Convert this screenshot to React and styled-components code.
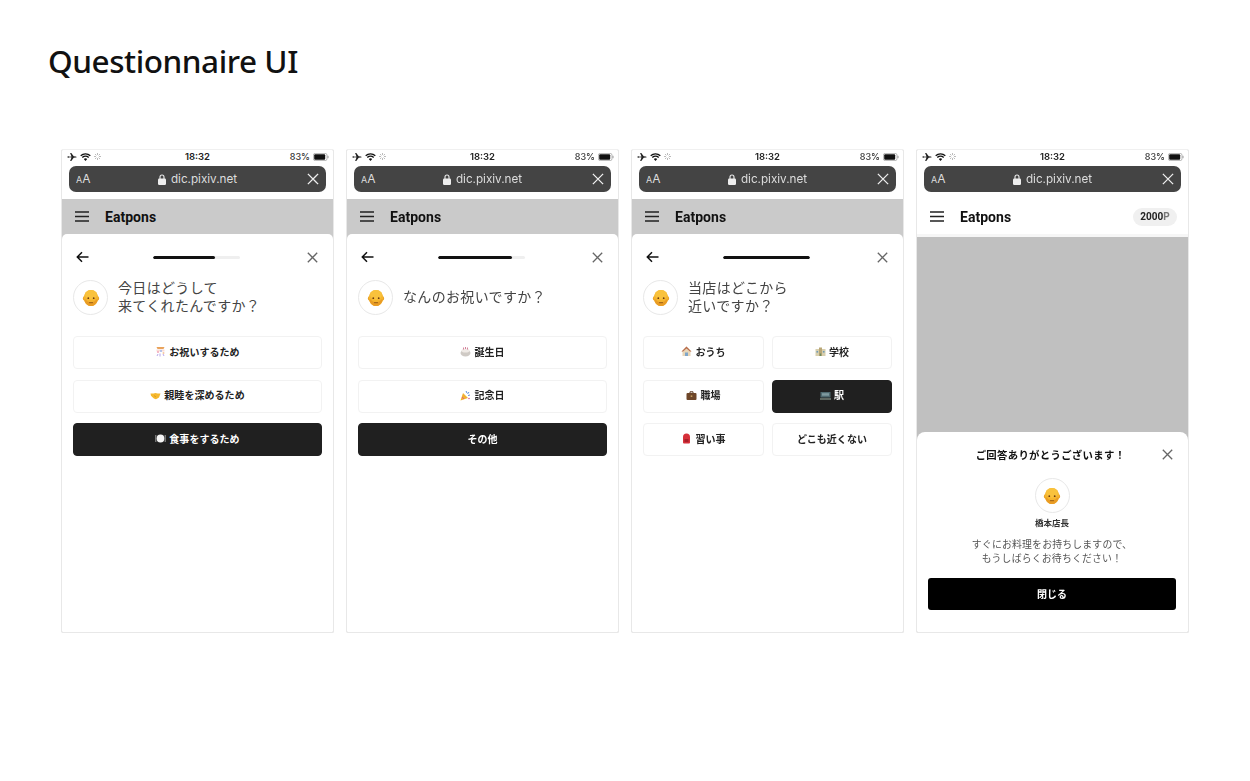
import React from "react";
import styled, { createGlobalStyle } from "styled-components";

const Global = createGlobalStyle`
  html, body { margin: 0; padding: 0; background: #fff; }
  body { font-family: "Noto Sans", "Noto Sans CJK JP", sans-serif; }
  * { box-sizing: border-box; }
`;
const JP = `"Noto Sans CJK JP", "Noto Sans", sans-serif`;

const Page = styled.main`
  width: 1250px; height: 781px; overflow: hidden; padding: 39px 0 0 48px;
`;
const Title = styled.h1`
  margin: 0; font: 500 31.5px/44px "Noto Sans", sans-serif; letter-spacing: -.45px; color: #111;
`;
const Screens = styled.div`
  display: flex; gap: 12px; margin: 66px 0 0 13px; filter: blur(.3px);
`;
const Phone = styled.section`
  width: 273px; height: 484px; display: flex; flex-direction: column;
  background: ${p => p.$tone}; border: 1px solid #e8e8e8; border-top-color: #f0f0f0; border-radius: 2px; overflow: hidden;
`;
const TopBars = styled.div`flex: none; background: #fff;`;
const Status = styled.div`
  height: 13px; padding: 0 4px 0 5px; display: flex; align-items: center; justify-content: space-between;
  position: relative; font: 500 9px/13px Inter, sans-serif; color: #333;
`;
const StatusGroup = styled.div`display: flex; align-items: center; gap: 3px;`;
const Clock = styled.span`position: absolute; left: 0; right: 0; text-align: center; font-weight: 600; font-size: 9.5px; color: #222;`;
const UrlBar = styled.div`
  height: 26px; margin: 3px 7px 7px; padding: 0 7px; background: #444; border-radius: 7px;
  display: flex; align-items: center; justify-content: space-between; color: #ddd; position: relative;
`;
const AaLabel = styled.span`font: 400 12px/26px Inter, sans-serif; small { font-size: 9px; }`;
const Address = styled.span`
  position: absolute; left: 0; right: 0; display: flex; justify-content: center; align-items: center; gap: 5px;
  font: 400 11.7px/26px Inter, sans-serif;
`;
const Header = styled.header`
  flex: none; height: 35px; padding: 0 11px 0 13px; display: flex; align-items: center; gap: 16px;
  background: ${p => (p.$light ? "#fff" : "#cacaca")};
`;
const Brand = styled.span`font: 700 14px/20px Roboto, sans-serif; letter-spacing: .03px; color: #111; flex: 1;`;
const Points = styled.span`
  width: 44px; height: 18px; border-radius: 9px; background: #f0f0f0; text-align: center;
  font: 700 10px/18px Roboto, sans-serif; color: #222; em { font-style: normal; color: #777; }
`;
const Card = styled.div`
  flex: 1; background: #fff; border-radius: 5px 5px 0 0; padding: 0 11px;
  display: flex; flex-direction: column;
`;
const Nav = styled.div`
  height: 46px; flex: none; padding: 0 4px 0 3px; display: flex; align-items: center; justify-content: space-between;
`;
const Track = styled.div`width: 87px; height: 3px; margin-left: -4px; background: #efefef; border-radius: 2px; overflow: hidden;`;
const Fill = styled.div`height: 100%; background: #111; border-radius: 2px;`;
const Question = styled.div`
  height: 35px; flex: none; display: flex; align-items: center; gap: 10px;
`;
const Avatar = styled.div`
  width: 35px; height: 35px; flex: none; border-radius: 50%; border: 1px solid #e8e8e8;
  display: flex; align-items: center; justify-content: center; background: #fff;
`;
const QText = styled.p`
  margin: 0 0 4px; font: 400 14px/18px ${JP}; letter-spacing: .33px; color: #444; white-space: pre-line;
`;
const Choices = styled.div`
  margin-top: 21px; display: grid; row-gap: 10.5px; column-gap: 8px;
  grid-template-columns: ${p => (p.$two ? "121px 120px" : "249px")};
`;
const Choice = styled.button`
  height: 33px; padding: 0 0 2px; border-radius: 4px; display: flex; align-items: center; justify-content: center; gap: 3px;
  border: 1px solid ${p => (p.$on ? "#202020" : "#f2f2f2")};
  background: ${p => (p.$on ? "#202020" : "#fff")};
  color: ${p => (p.$on ? "#fff" : "#222")};
  font: 700 10px/14px ${JP}; letter-spacing: .05px;
`;
const Blank = styled.div`flex: 1; background: #c0c0c0; border-top: 3px solid #f6f6f6;`;
const Sheet = styled.div`
  flex: none; height: 200px; background: #fff; border-radius: 8px 8px 0 0; margin-top: -1px; padding: 0 12px 0 11px;
  display: flex; flex-direction: column; align-items: center; position: relative;
`;
const SheetTitle = styled.h2`
  margin: 15px 0 0; font: 700 10.4px/16px ${JP}; letter-spacing: .3px; color: #111; transform: translateX(-1.500px);
`;
const SheetClose = styled.span`position: absolute; right: 15px; top: 17px; display: flex;`;
const SheetAvatar = styled(Avatar)`margin-top: 15px;`;
const Manager = styled.div`margin-top: 3px; font: 700 8.5px/12px ${JP}; color: #333;`;
const Message = styled.p`
  margin: 9px 0 0; text-align: center; font: 400 9.9px/14px ${JP}; letter-spacing: .17px; color: #555; white-space: pre-line;
`;
const CloseButton = styled.button`
  margin-top: 13px; width: 100%; height: 32px; border: 0; border-radius: 3px; background: #000; color: #fff;
  font: 700 10px/14px ${JP};
`;

const Face = ({ s = 18 }) => (
  <svg width={s} height={s} viewBox="0 0 20 20">
    <ellipse cx="2.600" cy="10.500" rx="1.600" ry="2.400" fill="#e8a025" />
    <ellipse cx="17.400" cy="10.500" rx="1.600" ry="2.400" fill="#e8a025" />
    <ellipse cx="10" cy="10" rx="8" ry="9" fill="#f5b52e" />
    <ellipse cx="10" cy="6.500" rx="6.500" ry="5.500" fill="#f9c23c" />
    <path d="M2.300 11c.8 5 4 8 7.700 8s6.900-3 7.700-8c-.7.800-1.400 1-2.200.6-.7 2.200-2.800 2.900-5.500 2.900s-4.800-.7-5.500-2.900c-.8.400-1.500.2-2.200-.6z" fill="#e99c24" />
    <circle cx="7" cy="10.200" r="1" fill="#6b3b12" /><circle cx="13" cy="10.200" r="1" fill="#6b3b12" />
    <path d="M7.800 15.200h4.400" stroke="#8a5214" strokeWidth=".9" />
  </svg>
);
const X = ({ s = 11, c = "#666", w = 1.3 }) => (
  <svg width={s} height={s} viewBox="0 0 11 11"><path d="M.8.800l9.400 9.400M10.200.800L.8 10.200" stroke={c} strokeWidth={w} fill="none" /></svg>
);
const Back = () => (
  <svg width="13" height="12" viewBox="0 0 13 12"><path d="M12.500 6H1.500M6 1.300L1.300 6 6 10.700" stroke="#111" strokeWidth="1.500" fill="none" /></svg>
);
const Burger = () => (
  <svg width="14" height="11" viewBox="0 0 14 11"><path d="M0 1h14M0 5.500h14M0 10h14" stroke="#222" strokeWidth="1.400" /></svg>
);
const Lock = () => (
  <svg width="8" height="11" viewBox="0 0 8 11"><path d="M2 5V3a2 2 0 014 0v2" stroke="#eee" strokeWidth="1.100" fill="none" /><rect y="4.500" width="8" height="6.500" rx="1.200" fill="#eee" /></svg>
);
const Plane = () => (
  <svg width="10" height="8" viewBox="0 0 9 8"><path d="M0 3.400l1-.2 1.300.5L4 3.500 2.600 0h1.200l2.400 3.300 2.100.1c1 .3 1 .9 0 1.200l-2.100.1L3.800 8H2.600L4 4.500l-1.700-.2-1.300.5-1-.2z" fill="#222" /></svg>
);
const Wifi = () => (
  <svg width="11" height="8" viewBox="0 0 11 8"><path d="M.7 2.800a7 7 0 019.600 0M2.300 4.500a4.600 4.600 0 016.400 0" stroke="#111" strokeWidth="1.400" fill="none" /><path d="M5.500 8L3.800 6a2.400 2.400 0 013.400 0z" fill="#111" /></svg>
);
const Spinner = () => (
  <svg width="7" height="7" viewBox="0 0 7 7"><path d="M3.500 0v2M3.500 5v2M0 3.500h2M5 3.500h2M1 1l1.400 1.400M4.600 4.600L6 6M6 1L4.600 2.400M1 6l1.400-1.400" stroke="#aaa" strokeWidth=".8" /></svg>
);
const Battery = () => (
  <svg width="16" height="8" viewBox="0 0 16 8"><rect x=".4" y=".4" width="13.600" height="7.200" rx="1.800" fill="none" stroke="#999" strokeWidth=".7" /><rect x="1.200" y="1.200" width="11" height="5.600" rx="1" fill="#111" /><path d="M15 2.800v2.400" stroke="#999" /></svg>
);

const E = ({ children }) => <svg width="11" height="11" viewBox="0 0 11 11">{children}</svg>;
const icons = {
  confetti: <E><path d="M1.500 1h8L8.500 3h-6z" fill="#e9a35b" /><path d="M1.500 3.500h8v2h-8z" fill="#f9dcd6" /><circle cx="3" cy="6" r="1" fill="#f3a6b8" /><circle cx="6" cy="5" r="1" fill="#9db8ee" /><circle cx="8.500" cy="7" r="1" fill="#f5c6a0" /><path d="M2 10l1-2M5 10.500V7.500M9 10L8 8" stroke="#b9a6e8" /></E>,
  hands: <E><path d="M.5 3.500h3l2-.6 2 .6h3L9 7.500 6 9.200c-1 0-3-1-5-3.500z" fill="#f5b82e" /><path d="M4 5.500l2 1.500" stroke="#d48f12" strokeWidth=".7" /></E>,
  plate: <E><circle cx="5.500" cy="5.500" r="3.900" fill="#f4f4f4" /><path d="M.8 2v7M10.200 2v7" stroke="#999" /></E>,
  cake: <E><ellipse cx="5.500" cy="7" rx="5" ry="3.500" fill="#cfcac5" /><ellipse cx="5.500" cy="4.500" rx="4" ry="2" fill="#efeae6" /><path d="M3.500 1.500v2M5.500 1v2M7.500 1.500v2" stroke="#d5809a" /></E>,
  party: <E><path d="M.5 10.500L3 3l5 5z" fill="#f0b132" /><path d="M2 7l2 2" stroke="#e0598a" /><path d="M6 1l1 2M9 2L7.500 4M10 5L8 5.500" stroke="#5a8fe0" /><circle cx="9" cy="8.500" r=".8" fill="#e0598a" /></E>,
  house: <E><path d="M5.500.5L10.500 5.500H9.500V10h-8V5.500H.5z" fill="#e8d6b8" /><path d="M5.500.5L10.500 5.500 9 5.500 5.500 2.500 2 5.500H.5z" fill="#b86b4b" /><rect x="4" y="6.500" width="3" height="3.500" fill="#7fa6c9" /></E>,
  school: <E><rect x=".5" y="3" width="10" height="7" fill="#d8cfae" /><rect x="4" y="1.500" width="3" height="8.500" fill="#b9a777" /><rect x="1.500" y="5" width="1.600" height="1.600" fill="#6f9ab5" /><rect x="7.900" y="5" width="1.600" height="1.600" fill="#6f9ab5" /><rect x="4.800" y="7.500" width="1.400" height="2.500" fill="#6a8a5f" /></E>,
  brief: <E><path d="M4 3V1.800h3V3" fill="none" stroke="#5b3a22" /><rect x=".5" y="3" width="10" height="7" rx="1" fill="#6e4629" /><rect x="4.700" y="5.500" width="1.600" height="1.300" fill="#d9b36a" /></E>,
  station: <E><path d="M.5 2h10v5.500H.5z" fill="#4f6a70" /><path d="M2 3.200h7v2.500H2z" fill="#7f9a9f" /><path d="M0 9h11" stroke="#8a9a8e" strokeWidth="1.200" /></E>,
  pack: <E><path d="M2 4a3.500 3.500 0 017 0v5.500a1 1 0 01-1 1H3a1 1 0 01-1-1z" fill="#d6303a" /><rect x="3.500" y="6" width="4" height="3" fill="#a91f29" /></E>,
};

const ChoiceItem = ({ icon, label, on }) => (
  <Choice $on={on}>{icon && icons[icon]}<span>{label}</span></Choice>
);

const Chrome = ({ light, points }) => (
  <>
    <TopBars>
      <Status>
        <StatusGroup><Plane /><Wifi /><Spinner /></StatusGroup>
        <Clock>18:32</Clock>
        <StatusGroup>83%<Battery /></StatusGroup>
      </Status>
      <UrlBar>
        <AaLabel><small>A</small>A</AaLabel>
        <Address><Lock />dic.pixiv.net</Address>
        <X s={12} c="#eee" w={1.2} />
      </UrlBar>
    </TopBars>
    <Header $light={light}>
      <Burger />
      <Brand>Eatpons</Brand>
      {points && <Points>2000<em>P</em></Points>}
    </Header>
  </>
);

const Step = ({ pct, text, two, choices }) => (
  <Phone $tone="#cacaca">
    <Chrome />
    <Card>
      <Nav>
        <Back />
        <Track><Fill style={{ width: `${pct}%` }} /></Track>
        <X />
      </Nav>
      <Question>
        <Avatar><Face /></Avatar>
        <QText>{text}</QText>
      </Question>
      <Choices $two={two}>
        {choices.map(c => <ChoiceItem key={c.label} {...c} />)}
      </Choices>
    </Card>
  </Phone>
);

export default function App() {
  return (
    <Page>
      <Global />
      <Title>Questionnaire UI</Title>
      <Screens>
        <Step pct={72} text={"今日はどうして\n来てくれたんですか？"} choices={[
          { icon: "confetti", label: "お祝いするため" },
          { icon: "hands", label: "親睦を深めるため" },
          { icon: "plate", label: "食事をするため", on: true },
        ]} />
        <Step pct={86} text="なんのお祝いですか？" choices={[
          { icon: "cake", label: "誕生日" },
          { icon: "party", label: "記念日" },
          { label: "その他", on: true },
        ]} />
        <Step pct={100} two text={"当店はどこから\n近いですか？"} choices={[
          { icon: "house", label: "おうち" },
          { icon: "school", label: "学校" },
          { icon: "brief", label: "職場" },
          { icon: "station", label: "駅", on: true },
          { icon: "pack", label: "習い事" },
          { label: "どこも近くない" },
        ]} />
        <Phone $tone="#c0c0c0">
          <Chrome light points />
          <Blank />
          <Sheet>
            <SheetTitle>ご回答ありがとうございます！</SheetTitle>
            <SheetClose><X /></SheetClose>
            <SheetAvatar><Face /></SheetAvatar>
            <Manager>橋本店長</Manager>
            <Message>{"すぐにお料理をお持ちしますので、\nもうしばらくお待ちください！"}</Message>
            <CloseButton>閉じる</CloseButton>
          </Sheet>
        </Phone>
      </Screens>
    </Page>
  );
}
